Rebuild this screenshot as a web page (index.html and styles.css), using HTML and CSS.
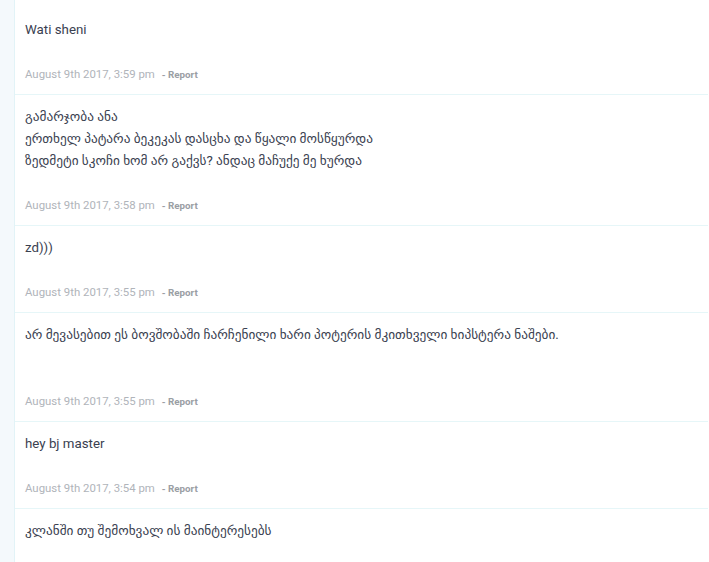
FILE: index.html
```html
<!DOCTYPE html>
<html>
<head>
<meta charset="utf-8">
<link rel="stylesheet" href="styles.css">
</head>
<body>
<div class="page">
  <div class="sidebar"></div>
  <div class="comments">
    <div class="comment">
      <div class="text">Wati sheni</div>
      <div class="meta">August 9th 2017, 3:59 pm <span class="report">- Report</span></div>
    </div>
    <div class="comment">
      <div class="text">გამარჯობა ანა<br>ერთხელ პატარა ბეკეკას დასცხა და წყალი მოსწყურდა<br>ზედმეტი სკოჩი ხომ არ გაქვს? ანდაც მაჩუქე მე ხურდა</div>
      <div class="meta">August 9th 2017, 3:58 pm <span class="report">- Report</span></div>
    </div>
    <div class="comment">
      <div class="text">zd)))</div>
      <div class="meta">August 9th 2017, 3:55 pm <span class="report">- Report</span></div>
    </div>
    <div class="comment">
      <div class="text">არ მევასებით ეს ბოვშობაში ჩარჩენილი ხარი პოტერის მკითხველი ხიპსტერა ნაშები.<br><br></div>
      <div class="meta">August 9th 2017, 3:55 pm <span class="report">- Report</span></div>
    </div>
    <div class="comment">
      <div class="text">hey bj master</div>
      <div class="meta">August 9th 2017, 3:54 pm <span class="report">- Report</span></div>
    </div>
    <div class="comment last">
      <div class="text">კლანში თუ შემოხვალ ის მაინტერესებს</div>
    </div>
  </div>
</div>
</body>
</html>
```
FILE: styles.css
```css
html, body {
  margin: 0;
  padding: 0;
  background: #ffffff;
}
body {
  font-family: "Roboto", "DejaVu Sans", sans-serif;
  height: 562px;
  overflow: hidden;
}
.page {
  display: flex;
  min-height: 562px;
}
.sidebar {
  width: 14px;
  flex: none;
  background: #f4f9fc;
  border-right: 1px solid #e2f3f7;
}
.comments {
  flex: 1;
  padding-top: 8px;
  margin-right: 1px;
}
.comment {
  padding: 11px 10px 10px 10px;
  border-bottom: 1px solid #e6f6f8;
}
.comment.last {
  border-bottom: none;
}
.text {
  font-size: 13.3px;
  line-height: 22px;
  color: #3a4150;
}
.meta {
  margin-top: 24px;
  font-size: 11.4px;
  line-height: 18px;
  color: #b0b4ba;
}
.report {
  margin-left: 4px;
  font-size: 9.8px;
  font-weight: bold;
  color: #9a9ea4;
}
```
